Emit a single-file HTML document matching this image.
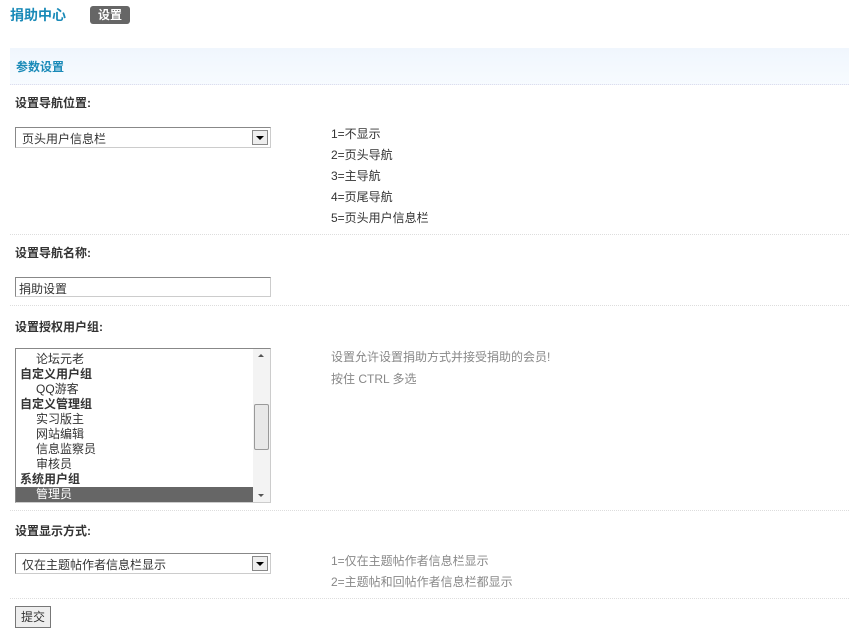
<!DOCTYPE html><html><head><meta charset="utf-8"><style>
body{margin:0;width:849px;height:633px;background:#fff;font-family:"Liberation Sans","Noto Sans CJK SC",sans-serif;font-size:12px;color:#333;position:relative;overflow:hidden}
.a{position:absolute;white-space:nowrap}
.t{left:10px;top:5px;font-size:14px;font-weight:bold;color:#1a8ab8}
.bd{left:90px;top:6px;width:40px;height:18px;background:#666;border-radius:3px;color:#fff;font-weight:bold;font-size:12px;text-align:center;line-height:18px}
.hd{left:10px;top:48px;width:839px;height:36px;background:linear-gradient(#f0f6fd,#f7fbff);border-bottom:1px dotted #dde;}
.hd span{position:absolute;left:6px;top:10px;font-weight:bold;color:#1a8ab8}
.lb{left:15px;font-weight:bold}
.sep{left:10px;width:839px;border-top:1px dotted #ddd}
.sel{left:15px;width:254px;height:19px;border:1px solid #7f9db9;border-color:#888 #ccc #ccc #888;background:#fff}
.sel span{position:absolute;left:6px;top:2px}
.sel i{position:absolute;right:2px;top:2px;width:14px;height:13px;border:1px solid #888;background:#eee}
.sel i:after{content:"";position:absolute;left:3px;top:5px;border:4px solid transparent;border-top:4px solid #000;border-bottom:0}
.n{left:331px;line-height:21px}
.g{color:#888;left:331px;line-height:22px}
.lst{left:15px;top:348px;width:254px;height:153px;border:1px solid #888;border-color:#888 #ccc #ccc #888;overflow:hidden}
.lst>div{height:15px;line-height:15px;padding-left:4px}
.lst>.c{padding-left:20px}
.lst>b{display:block;height:15px;line-height:15px;padding-left:4px}
.lst>.sb{position:absolute;right:0;top:0;width:17px;height:153px;background:#f3f3f3;padding:0}
.th{position:absolute;left:1px;top:55px;width:13px;height:44px;border:1px solid #999;border-radius:2px;background:#e8e8e8}
.up,.dn{position:absolute;left:5px;border:3px solid transparent}
.up{top:5px;border-bottom:3px solid #555;border-top:0}
.dn{bottom:5px;border-top:3px solid #555;border-bottom:0}
.btn{left:15px;top:606px;width:34px;height:20px;border:1px solid #777;background:#eee;text-align:center;line-height:20px}
</style></head><body>
<div class="a t">捐助中心</div>
<div class="a bd">设置</div>
<div class="a hd"><span>参数设置</span></div>
<div class="a lb" style="top:94px">设置导航位置:</div>
<div class="a sel" style="top:127px"><span>页头用户信息栏</span><i></i></div>
<div class="a n" style="top:124px">1=不显示<br>2=页头导航<br>3=主导航<br>4=页尾导航<br>5=页头用户信息栏</div>
<div class="a sep" style="top:234px"></div>
<div class="a lb" style="top:244px">设置导航名称:</div>
<div class="a sel" style="top:277px;height:18px"><span style="left:3px;top:2px">捐助设置</span></div>
<div class="a sep" style="top:305px"></div>
<div class="a lb" style="top:318px">设置授权用户组:</div>
<div class="a lst">
<div class="c" style="margin-top:3px">论坛元老</div><b>自定义用户组</b><div class="c">QQ游客</div><b>自定义管理组</b><div class="c">实习版主</div><div class="c">网站编辑</div><div class="c">信息监察员</div><div class="c">审核员</div><b>系统用户组</b><div class="c" style="background:#666;color:#fff;margin-right:17px">管理员</div>
<div class="sb"><span class="up"></span><div class="th"></div><span class="dn"></span></div>
</div>
<div class="a g" style="top:346px">设置允许设置捐助方式并接受捐助的会员!<br>按住 CTRL 多选</div>
<div class="a sep" style="top:510px"></div>
<div class="a lb" style="top:522px">设置显示方式:</div>
<div class="a sel" style="top:553px"><span>仅在主题帖作者信息栏显示</span><i></i></div>
<div class="a g" style="top:551px;line-height:21px">1=仅在主题帖作者信息栏显示<br>2=主题帖和回帖作者信息栏都显示</div>
<div class="a sep" style="top:598px"></div>
<div class="a btn">提交</div>
</body></html>
